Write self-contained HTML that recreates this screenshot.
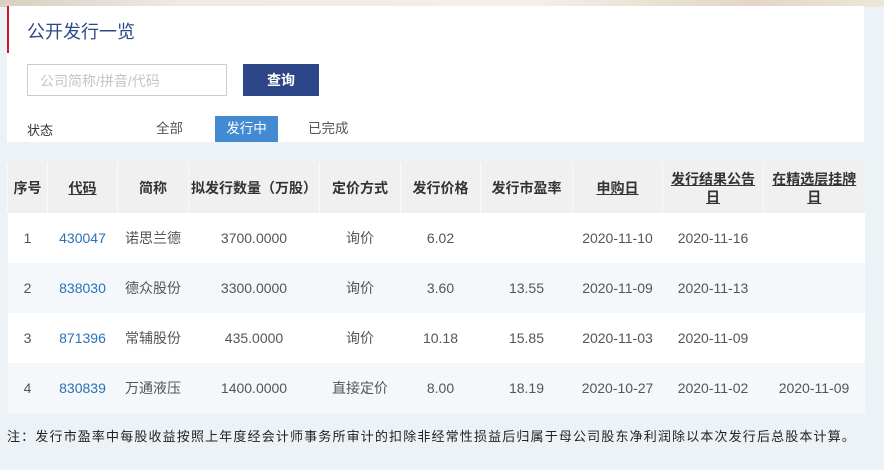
<!DOCTYPE html>
<html><head><meta charset="utf-8"><style>
*{margin:0;padding:0;box-sizing:border-box}
body{width:884px;height:470px;background:#ecf2f5;font-family:"Liberation Sans","Noto Sans CJK SC",sans-serif;position:relative;overflow:hidden;color:#333}
.top{position:absolute;left:0;top:0;width:884px;height:7px;background:linear-gradient(90deg,#d9cfc2,#efe9e2 20%,#f4efe8 60%,#e3d6c4 85%,#efe6da)}
.card{position:absolute;left:7px;top:6px;width:857px;height:136px;background:#fff}
.red{position:absolute;left:7px;top:6px;width:2px;height:47px;background:#d0142c}
.title{position:absolute;left:27px;top:18px;font-size:18px;color:#2c4a86}
.inp{position:absolute;left:27px;top:64px;width:200px;height:32px;border:1px solid #ccc;font-size:14px;color:#c4c4c4;padding:6px 12px}
.btn{position:absolute;left:243px;top:64px;width:76px;height:32px;background:#2d4688;color:#fff;font-size:14px;font-weight:bold;text-align:center;line-height:32px}
.st{position:absolute;top:120px;font-size:13px;color:#333}
.tab{position:absolute;top:116px;height:26px;line-height:26px;font-size:13.5px;color:#555}
.on{background:#428bd2;color:#fff;width:63px;text-align:center}
table{position:absolute;left:7px;top:163px;width:857px;border-collapse:collapse;font-size:14px;table-layout:fixed}
th{background:#f0f0f0;height:50px;font-weight:bold;color:#333;border-left:1px solid #fafafa;line-height:18px;padding:0 4px}
th u{text-decoration:underline}
td{height:50px;text-align:center;color:#555}
td a{color:#2a72b8;text-decoration:none}
tr.a td{background:#fff}tr.b td{background:#f4f8fa}
.note{position:absolute;left:7px;top:426px;font-size:13px;letter-spacing:1.15px;color:#222;white-space:nowrap}
</style></head><body>
<div class="top"></div>
<div class="card"></div><div class="red"></div>
<div class="title">公开发行一览</div>
<div class="inp">公司简称/拼音/代码</div>
<div class="btn">查询</div>
<div class="st" style="left:27px">状态</div>
<div class="tab" style="left:156px">全部</div>
<div class="tab on" style="left:215px">发行中</div>
<div class="tab" style="left:308px">已完成</div>
<table>
<colgroup><col style="width:40px"><col style="width:70px"><col style="width:71px"><col style="width:131px"><col style="width:81px"><col style="width:80px"><col style="width:92px"><col style="width:90px"><col style="width:101px"><col style="width:101px"></colgroup>
<tr><th style="padding:0">序号</th><th><u>代码</u></th><th>简称</th><th style="padding:0">拟发行数量（万股）</th><th>定价方式</th><th>发行价格</th><th>发行市盈率</th><th><u>申购日</u></th><th><u>发行结果公告日</u></th><th><u>在精选层挂牌日</u></th></tr>
<tr class="a"><td>1</td><td><a>430047</a></td><td>诺思兰德</td><td>3700.0000</td><td>询价</td><td>6.02</td><td></td><td>2020-11-10</td><td>2020-11-16</td><td></td></tr>
<tr class="b"><td>2</td><td><a>838030</a></td><td>德众股份</td><td>3300.0000</td><td>询价</td><td>3.60</td><td>13.55</td><td>2020-11-09</td><td>2020-11-13</td><td></td></tr>
<tr class="a"><td>3</td><td><a>871396</a></td><td>常辅股份</td><td>435.0000</td><td>询价</td><td>10.18</td><td>15.85</td><td>2020-11-03</td><td>2020-11-09</td><td></td></tr>
<tr class="b"><td>4</td><td><a>830839</a></td><td>万通液压</td><td>1400.0000</td><td>直接定价</td><td>8.00</td><td>18.19</td><td>2020-10-27</td><td>2020-11-02</td><td>2020-11-09</td></tr>
</table>
<div class="note">注：发行市盈率中每股收益按照上年度经会计师事务所审计的扣除非经常性损益后归属于母公司股东净利润除以本次发行后总股本计算。</div>
</body></html>
